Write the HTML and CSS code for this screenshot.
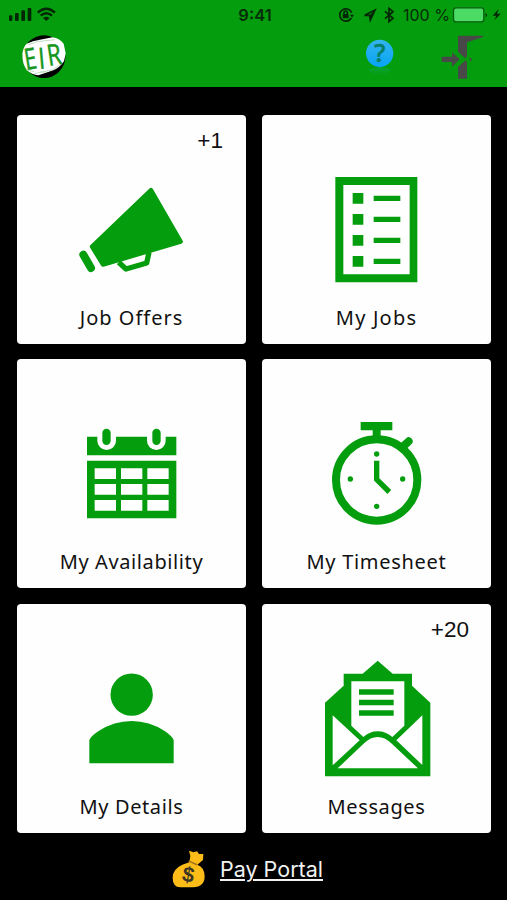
FILE: index.html
```html
<!DOCTYPE html>
<html lang="en">
<head>
    <meta charset="UTF-8">
    <meta name="viewport" content="width=device-width, initial-scale=1.0">
    <title>EIR</title>
    <link rel="stylesheet" href="styles.css">
</head>
<body>
    <header class="header">
        <div class="status-bar">
            <svg class="status-signal" viewBox="24 0 150 90">
                <rect x="27" y="46" width="10" height="17" rx="3"/>
                <rect x="45" y="39" width="11" height="24" rx="3"/>
                <rect x="64" y="31" width="11" height="32" rx="3"/>
                <rect x="83" y="24" width="11" height="39" rx="3"/>
                <g class="wifi">
                    <path d="M113 38Q139 14 165 38"/>
                    <path d="M122 47Q139 32 156 47"/>
                </g>
                <path d="M129 54Q139 46 149 54L139 63Z"/>
            </svg>
            <div class="status-time">9:41</div>
            <div class="status-right">
                <svg class="status-icons" viewBox="24 0 171 90">
                    <g class="thin">
                        <path d="M64 54A18.500 18.500 0 1 1 65 38"/>
                        <path d="M42 43v-5a5 5 0 0 1 10 0v5"/>
                        <path d="M104 46L135 30L121 60L119 46Z"/>
                        <path d="M165 34L189 55L177 65V25L189 35L165 56"/>
                    </g>
                    <rect x="38" y="42" width="18" height="13" rx="2"/>
                    <path d="M60 44h12l-6 9z"/>
                    <path d="M119 46L135 30L121 60Z"/>
                </svg>
                <span class="status-percent">100 %</span>
                <svg class="status-battery" viewBox="366 0 150 90">
                    <rect class="battery-body" x="370.500" y="23.500" width="91" height="42" rx="8"/>
                    <path d="M467 38q8 7 0 14z"/>
                    <path d="M506 27L488 47H499L493 61L512 41H501Z"/>
                </svg>
            </div>
        </div>
        <div class="nav-bar">
            <svg class="logo" viewBox="66 102 135 135">
                <circle cx="132" cy="170" r="64" fill="#000"/>
                <path d="M80 131Q98 122 120 119L158 112Q178 115 191 131L197 160L192 184Q176 206 160 211L115 226Q96 225 80 210Q66 190 67 162Q70 140 80 131Z" fill="#fff"/>
                <path d="M83 135L112 125L164 119M103 221L158 209L186 191M76 203L84 211L103 215M120 216h20" class="logo-sketch"/>
                <g class="logo-text">
                    <text transform="translate(78 210) rotate(-9) scale(.74 1)">E</text>
                    <text transform="translate(118 207) rotate(-5) scale(.8 1)">I</text>
                    <text transform="translate(146 198) rotate(-9) scale(.78 1)">R</text>
                </g>
            </svg>
            <div class="nav-actions">
                <svg class="help-icon" viewBox="106 110 90 120">
                    <defs>
                        <linearGradient id="blue" x1="0" y1="0" x2="0" y2="1">
                            <stop offset="0" stop-color="#32b4ee"/>
                            <stop offset="1" stop-color="#08a4f5"/>
                        </linearGradient>
                        <linearGradient id="shade" x1="0" y1="0" x2="0" y2="1">
                            <stop offset="0" stop-color="#10a861"/>
                            <stop offset="1" stop-color="#049d0d"/>
                        </linearGradient>
                    </defs>
                    <path d="M116 208Q150 192 184 208L170 224H130Z" fill="url(#shade)" opacity=".5"/>
                    <circle cx="150" cy="159" r="41" fill="url(#blue)"/>
                    <text x="150" y="185" text-anchor="middle" class="help-mark">?</text>
                </svg>
                <svg class="exit-icon" viewBox="334 100 132 140">
                    <path d="M385 105H463L458 110L412 125V164L407 176L412 186V234H385V198L409 176L385 153Z"/>
                    <path d="M336 168H367V155L390 176L367 198V184H336Z"/>
                    <path d="M385 158L408 176L385 196" class="exit-cut"/>
                    <path d="M419 170l8 6-6 7z"/>
                </svg>
            </div>
        </div>
    </header>

    <main class="menu">
        <a class="tile">
            <span class="tile-count one">+1</span>
            <svg class="tile-icon" viewBox="21 151 687 420">
                <path d="M246 423L423 253L512 408L279 477Z" class="rounded"/>
                <path d="M220 447L243 487" class="megaphone-end"/>
                <path d="M326 470L348 490L410 472L417 440" class="megaphone-grip"/>
            </svg>
            <span class="tile-label offers">Job Offers</span>
        </a>
        <a class="tile">
            <svg class="tile-icon" viewBox="21 151 687 420">
                <path d="M241 214H487V530H241ZM265 238V506H464V238Z" fill-rule="evenodd"/>
                <path d="M293 262h32v32h-32zM293 325h32v32h-32zM293 388h32v32h-32zM293 451h32v32h-32z"/>
                <path d="M356 270h80v16h-80zM356 333h80v16h-80zM356 396h80v16h-80zM356 459h80v16h-80z"/>
            </svg>
            <span class="tile-label jobs">My Jobs</span>
        </a>
        <a class="tile">
            <svg class="tile-icon" viewBox="21 151 687 420">
                <path d="M231 261H262V273A28 28 0 0 0 318 273V261H411V273A28 28 0 0 0 467 273V261H499V317H231Z"/>
                <rect x="277" y="237" width="25" height="49" rx="12.500"/>
                <rect x="427" y="237" width="25" height="49" rx="12.500"/>
                <path d="M231 333H499V506H231Z"/>
                <path d="M254 356h64v32h-64zM333 356h64v32h-64zM412 356h64v32h-64zM254 403h64v32h-64zM333 403h64v32h-64zM412 403h64v32h-64zM254 451h64v32h-64zM333 451h64v32h-64zM412 451h64v32h-64z" fill="#fff"/>
            </svg>
            <span class="tile-label availability">My Availability</span>
        </a>
        <a class="tile">
            <svg class="tile-icon" viewBox="21 151 687 420">
                <path d="M317 217H412V242H377V264H353V242H317Z"/>
                <circle cx="365" cy="391" r="122" class="watch-ring"/>
                <path d="M446 289L461 275" class="watch-button"/>
                <path d="M365 333V389L403 427" class="watch-hands"/>
                <circle cx="365" cy="313" r="8"/>
                <circle cx="286" cy="388" r="8"/>
                <circle cx="443" cy="388" r="8"/>
                <circle cx="365" cy="470" r="8"/>
            </svg>
            <span class="tile-label timesheet">My Timesheet</span>
        </a>
        <a class="tile">
            <svg class="tile-icon" viewBox="21 151 687 420">
                <circle cx="365" cy="300" r="63.500"/>
                <path d="M238 506V436Q244 423 266 409Q312 379 365 379Q418 379 464 409Q486 424 491 436V506Z"/>
            </svg>
            <span class="tile-label details">My Details</span>
        </a>
        <a class="tile">
            <span class="tile-count">+20</span>
            <svg class="tile-icon" viewBox="21 151 687 420">
                <path d="M210 545V324L266 273V237H323L368 198L413 237H471V273L526 324V545Z"/>
                <path d="M289 260H448V393L412 427Q392 410 368 410Q344 410 325 427L289 393Z" fill="#fff"/>
                <path d="M233 362L314 437L233 512ZM502 362V511L424 437Z" fill="#fff"/>
                <path d="M248 521L328 445Q346 427 368 427Q390 427 408 445L489 521Z" fill="#fff"/>
                <path d="M312 284h104v16H312zM312 315h104v17H312zM312 347h104v16H312z"/>
            </svg>
            <span class="tile-label messages">Messages</span>
        </a>
    </main>

    <footer class="footer">
        <svg class="money-bag" viewBox="36 44 102 120">
            <path d="M88 84L91 65L87 49L101 54L111 51L117 59L130 59L129 77L112 91Q134 99 134 126Q134 158 99 159H61Q38 158 38 130Q38 104 67 91Z" fill="#fdbc18"/>
            <path d="M86 80L111 91" stroke="#a87518" stroke-width="5"/>
            <text x="85" y="143" text-anchor="middle" transform="rotate(10 85 123)" class="dollar">$</text>
        </svg>
        <a class="pay-link">Pay Portal</a>
    </footer>
</body>
</html>
```
FILE: styles.css
```css
body {
    margin: 0;
    height: 900px;
    background-color: #000;
    font-family: "Noto Sans", sans-serif;
    overflow: hidden;
}

svg {
    display: block;
    flex: none;
    overflow: visible;
}

.header {
    height: 87px;
    background-color: #049d0d;
}

/* Phone status bar */
.status-bar {
    display: grid;
    grid-template-columns: 1fr auto 1fr;
    align-items: center;
    height: 30px;
    padding: 0 5px 0 8px;
    font-family: Inter, sans-serif;
    color: #062c08;
    fill: #032605;
}

.status-signal {
    width: 50px;
    height: 30px;
}

.wifi {
    fill: none;
    stroke: #032605;
    stroke-width: 7;
}

.status-time {
    font-size: 16.5px;
    font-weight: 600;
}

.status-right {
    display: flex;
    align-items: center;
    justify-content: flex-end;
}

.status-icons {
    width: 57px;
    height: 30px;
}

.thin {
    fill: none;
    stroke: #032605;
    stroke-width: 5;
}

.status-percent {
    width: 46px;
    margin: 0 3px 0 8px;
    font-size: 16px;
    white-space: nowrap;
}

.status-battery {
    width: 50px;
    height: 30px;
}

.battery-body {
    fill: #4cdb64;
    stroke: #075e10;
    stroke-width: 4;
}

/* Logo and header actions */
.nav-bar {
    display: flex;
    justify-content: space-between;
    padding: 4px 22px 0;
}

.logo {
    width: 45px;
    height: 45px;
}

.logo-sketch {
    fill: none;
    stroke: #a5cda6;
    stroke-width: 2;
}

.logo-text {
    font-family: "Open Sans", sans-serif;
    font-size: 88px;
    fill: #16961c;
    stroke: #16961c;
    stroke-width: 1.5;
}

.nav-actions {
    display: flex;
    gap: 46px;
}

.help-icon {
    width: 30px;
    height: 40px;
    margin-top: 3px;
}

.help-mark {
    font-family: "Noto Sans", sans-serif;
    font-size: 74px;
    font-weight: 500;
    fill: #087f68;
    stroke: #087f68;
    stroke-width: 2;
}

.exit-icon {
    width: 44px;
    height: 46.7px;
    fill: #484848;
}

.exit-cut {
    fill: none;
    stroke: #049d0d;
    stroke-width: 4;
}

/* Menu tiles */
.menu {
    display: grid;
    grid-template-columns: 229px 229px;
    grid-auto-rows: 229px;
    justify-content: center;
    gap: 15.8px 16px;
    padding: 27.6px 0 0 1px;
}

.tile {
    position: relative;
    display: flex;
    flex-direction: column;
    align-items: center;
    padding-top: 41px;
    box-sizing: border-box;
    background-color: #fefefe;
    border-radius: 4px;
    color: #111;
}

.tile-count {
    position: absolute;
    top: 13px;
    right: 22px;
    font-family: "Liberation Sans", sans-serif;
    font-size: 22.5px;
    line-height: 26px;
}

.tile-count.one {
    right: 23px;
}

.tile-icon {
    width: 229px;
    height: 140px;
    fill: #049d0d;
}

.tile-label {
    margin-top: 8px;
    font-size: 20px;
    line-height: 28px;
    letter-spacing: 0.6px;
    white-space: nowrap;
}

.offers {
    letter-spacing: 1px;
}

.jobs {
    letter-spacing: 1.2px;
}

.timesheet {
    letter-spacing: 0.7px;
}

.rounded {
    stroke: #049d0d;
    stroke-width: 13;
    stroke-linejoin: round;
}

.megaphone-end {
    stroke: #049d0d;
    stroke-width: 24;
    stroke-linecap: round;
}

.megaphone-grip {
    fill: none;
    stroke: #049d0d;
    stroke-width: 16;
    stroke-linejoin: round;
}

.watch-ring {
    fill: none;
    stroke: #049d0d;
    stroke-width: 24;
}

.watch-button {
    stroke: #049d0d;
    stroke-width: 24;
    stroke-linecap: round;
}

.watch-hands {
    fill: none;
    stroke: #049d0d;
    stroke-width: 16;
}

/* Pay portal link */
.footer {
    display: flex;
    align-items: center;
    gap: 14px;
    padding: 16px 0 0 172px;
}

.money-bag {
    width: 34px;
    height: 40px;
}

.dollar {
    font-family: "Liberation Sans", sans-serif;
    font-size: 64px;
    font-weight: bold;
    fill: #3b3526;
}

.pay-link {
    font-family: Inter, sans-serif;
    font-size: 21.5px;
    line-height: 28px;
    color: #f2f2f2;
    text-decoration: underline;
    text-decoration-thickness: 1.5px;
    text-underline-offset: 2px;
}
```
